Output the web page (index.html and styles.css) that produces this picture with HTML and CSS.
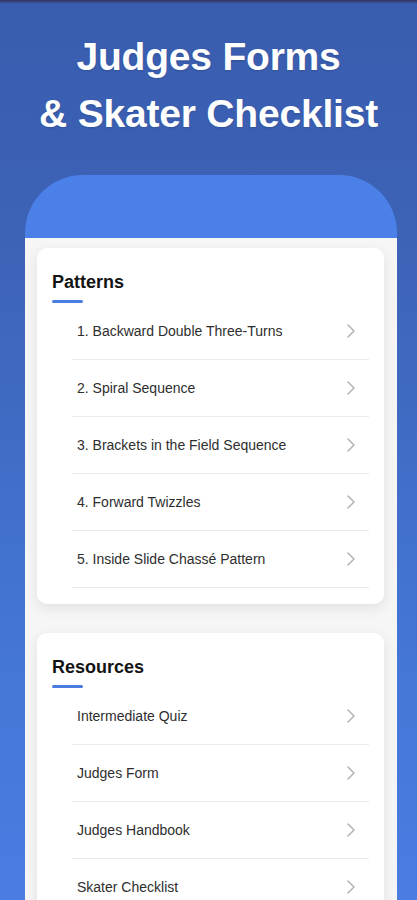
FILE: index.html
```html
<!DOCTYPE html>
<html lang="en">
<head>
<meta charset="utf-8">
<title>Judges Forms &amp; Skater Checklist</title>
<link rel="stylesheet" href="styles.css">
</head>
<body>
<div class="page">
  <div class="topbar"></div>
  <h1 class="title">Judges Forms<br>&amp; Skater Checklist</h1>
  <div class="phone">
    <div class="screen">
      <section class="card">
        <h2 class="card-title">Patterns</h2>
        <div class="underline"></div>
        <ul class="list">
          <li class="row"><span>1. Backward Double Three-Turns</span><svg class="chev" viewBox="0 0 8 14"><path d="M1 1l6 6-6 6"/></svg></li>
          <li class="row"><span>2. Spiral Sequence</span><svg class="chev" viewBox="0 0 8 14"><path d="M1 1l6 6-6 6"/></svg></li>
          <li class="row"><span>3. Brackets in the Field Sequence</span><svg class="chev" viewBox="0 0 8 14"><path d="M1 1l6 6-6 6"/></svg></li>
          <li class="row"><span>4. Forward Twizzles</span><svg class="chev" viewBox="0 0 8 14"><path d="M1 1l6 6-6 6"/></svg></li>
          <li class="row"><span>5. Inside Slide Chassé Pattern</span><svg class="chev" viewBox="0 0 8 14"><path d="M1 1l6 6-6 6"/></svg></li>
        </ul>
      </section>
      <section class="card">
        <h2 class="card-title">Resources</h2>
        <div class="underline"></div>
        <ul class="list">
          <li class="row"><span>Intermediate Quiz</span><svg class="chev" viewBox="0 0 8 14"><path d="M1 1l6 6-6 6"/></svg></li>
          <li class="row"><span>Judges Form</span><svg class="chev" viewBox="0 0 8 14"><path d="M1 1l6 6-6 6"/></svg></li>
          <li class="row"><span>Judges Handbook</span><svg class="chev" viewBox="0 0 8 14"><path d="M1 1l6 6-6 6"/></svg></li>
          <li class="row"><span>Skater Checklist</span><svg class="chev" viewBox="0 0 8 14"><path d="M1 1l6 6-6 6"/></svg></li>
        </ul>
      </section>
    </div>
  </div>
</div>
</body>
</html>
```
FILE: styles.css
```css
* { box-sizing: border-box; }
html, body {
  margin: 0;
  padding: 0;
  height: 900px;
  overflow: hidden;
}
body {
  font-family: "Liberation Sans", Arial, sans-serif;
  background: linear-gradient(180deg, #395cae 0%, #3d64b8 30%, #4577d8 75%, #4a7ce2 100%);
}
.page {
  display: flex;
  flex-direction: column;
  height: 900px;
}
.topbar {
  height: 3px;
  background: linear-gradient(180deg, #33365e, #3a5096);
  flex: none;
}
.title {
  margin: 25px 0 0;
  text-align: center;
  color: #ffffff;
  font-size: 39px;
  line-height: 57px;
  font-weight: bold;
  letter-spacing: -0.2px;
  text-shadow: 0 1px 2px rgba(0, 0, 0, 0.15);
}
.phone {
  margin: 33px 20px 0 25px;
  flex: 1;
  background: #4b80e8;
  border-radius: 58px 58px 0 0;
  padding-top: 63px;
  display: flex;
  flex-direction: column;
}
.screen {
  flex: 1;
  background: #f6f6f7;
  padding: 10px 13px 0 12px;
  display: flex;
  flex-direction: column;
  gap: 29px;
}
.card {
  background: #ffffff;
  border-radius: 10px;
  box-shadow: 0 4px 14px rgba(0, 0, 0, 0.09);
  padding: 23px 15px 16px 15px;
}
.card-title {
  margin: 0;
  font-size: 18px;
  line-height: 22px;
  font-weight: bold;
  color: #141414;
}
.underline {
  width: 31px;
  height: 3px;
  border-radius: 2px;
  background: #4a7de2;
  margin-top: 7px;
}
.list {
  list-style: none;
  margin: 0 0 0 20px;
  padding: 0;
}
.row {
  height: 57px;
  border-bottom: 1px solid #ebebeb;
  display: flex;
  align-items: center;
  justify-content: space-between;
  padding: 0 14px 0 5px;
  font-size: 14px;
  color: #2e2e2e;
}
.chev {
  width: 8px;
  height: 14px;
  fill: none;
  stroke: #b3b3b3;
  stroke-width: 1.5;
  stroke-linecap: round;
  stroke-linejoin: round;
}
```
